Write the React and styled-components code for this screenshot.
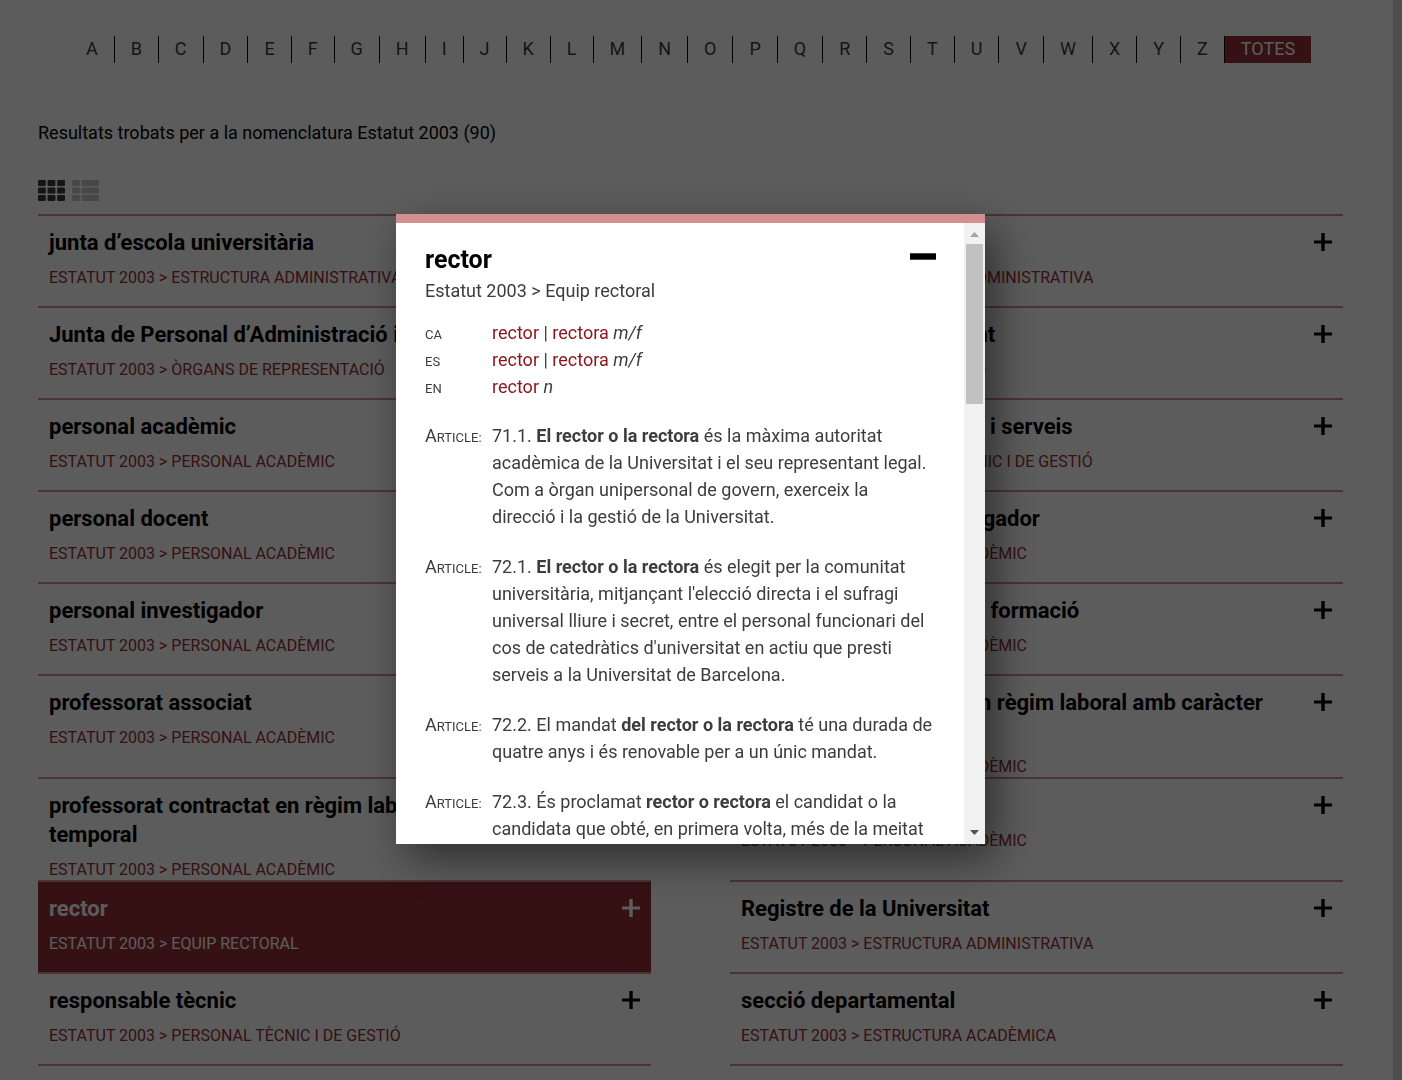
import React from "react";
import styled, { createGlobalStyle } from "styled-components";

const letters = "ABCDEFGHIJKLMNOPQRSTUVWXYZ".split("");

const terms = [
  { title: "junta d’escola universitària", area: "Estructura administrativa" },
  { title: "junta electoral", area: "Estructura administrativa" },
  {
    title: "Junta de Personal d’Administració i Serveis",
    area: "Òrgans de representació",
  },
  { title: "Junta de Personal Docent", area: "Representació" },
  { title: "personal acadèmic", area: "Personal acadèmic" },
  {
    title: "personal d’administració i serveis",
    area: "Personal tècnic i de gestió",
  },
  { title: "personal docent", area: "Personal acadèmic" },
  { title: "personal docent i investigador", area: "Personal acadèmic" },
  { title: "personal investigador", area: "Personal acadèmic" },
  { title: "personal investigador en formació", area: "Personal acadèmic" },
  { title: "professorat associat", area: "Personal acadèmic" },
  {
    title: "professorat contractat en règim laboral amb caràcter permanent",
    area: "Personal acadèmic",
  },
  {
    title: "professorat contractat en règim laboral amb caràcter temporal",
    area: "Personal acadèmic",
  },
  { title: "professorat emèrit", area: "Personal acadèmic" },
  { title: "rector", area: "Equip rectoral", active: true },
  { title: "Registre de la Universitat", area: "Estructura administrativa" },
  { title: "responsable tècnic", area: "Personal tècnic i de gestió" },
  { title: "secció departamental", area: "Estructura acadèmica" },
];

const translations = [
  { lang: "ca", words: ["rector", "rectora"], kind: "m/f" },
  { lang: "es", words: ["rector", "rectora"], kind: "m/f" },
  { lang: "en", words: ["rector"], kind: "n" },
];

const articles = [
  {
    before: "71.1. ",
    term: "El rector o la rectora",
    after:
      " és la màxima autoritat acadèmica de la Universitat i el seu representant legal. Com a òrgan unipersonal de govern, exerceix la direcció i la gestió de la Universitat.",
  },
  {
    before: "72.1. ",
    term: "El rector o la rectora",
    after:
      " és elegit per la comunitat universitària, mitjançant l'elecció directa i el sufragi universal lliure i secret, entre el personal funcionari del cos de catedràtics d'universitat en actiu que presti serveis a la Universitat de Barcelona.",
  },
  {
    before: "72.2. El mandat ",
    term: "del rector o la rectora",
    after: " té una durada de quatre anys i és renovable per a un únic mandat.",
  },
  {
    before: "72.3. És proclamat ",
    term: "rector o rectora",
    after:
      " el candidat o la candidata que obté, en primera volta, més de la meitat",
  },
];

export default function App() {
  return (
    <>
      <GlobalStyle />
      <Page>
        <Alphabet>
          {letters.map((letter) => (
            <LetterLink key={letter} href={`#${letter}`}>
              {letter}
            </LetterLink>
          ))}
          <AllLink href="#totes">TOTES</AllLink>
        </Alphabet>
        <Results>Resultats trobats per a la nomenclatura Estatut 2003 (90)</Results>
        <ViewSwitch>
          <ViewButton aria-label="Quadrícula">
            <GridIcon />
          </ViewButton>
          <ViewButton aria-label="Llista" $off>
            <ListIcon />
          </ViewButton>
        </ViewSwitch>
        <Terms>
          {terms.map((term) => (
            <Term key={term.title} $active={term.active}>
              <TermText>
                <TermTitle>{term.title}</TermTitle>
                <TermArea>Estatut 2003 &gt; {term.area}</TermArea>
              </TermText>
              <IconButton aria-label={`Obre ${term.title}`}>
                <PlusIcon />
              </IconButton>
            </Term>
          ))}
        </Terms>
      </Page>
      <Overlay>
        <Modal role="dialog" aria-labelledby="dialog-title">
          <ModalBody>
            <ModalHeader>
              <ModalTitle id="dialog-title">rector</ModalTitle>
              <IconButton aria-label="Tanca">
                <MinusIcon />
              </IconButton>
            </ModalHeader>
            <ModalArea>Estatut 2003 &gt; Equip rectoral</ModalArea>
            <Definitions>
              {translations.map(({ lang, words, kind }) => (
                <Definition key={lang}>
                  <Label>{lang}</Label>
                  <Description>
                    {words.map((word, index) => (
                      <React.Fragment key={word}>
                        {index > 0 && " | "}
                        <Word>{word}</Word>
                      </React.Fragment>
                    ))}{" "}
                    <em>{kind}</em>
                  </Description>
                </Definition>
              ))}
            </Definitions>
            {articles.map((article) => (
              <Article key={article.before}>
                <ArticleLabel>Article:</ArticleLabel>
                <Description>
                  {article.before}
                  <strong>{article.term}</strong>
                  {article.after}
                </Description>
              </Article>
            ))}
          </ModalBody>
          <ScrollTrack aria-hidden="true">
            <ScrollArrow color="#a3a3a3">
              <path d="M0 5 4.500 0 9 5z" />
            </ScrollArrow>
            <ScrollThumb />
            <ScrollArrow color="#505050">
              <path d="M0 0 4.500 5 9 0z" />
            </ScrollArrow>
          </ScrollTrack>
        </Modal>
      </Overlay>
    </>
  );
}

function ScrollArrow({ color, children }) {
  return (
    <svg width="9" height="5" viewBox="0 0 9 5" fill={color}>
      {children}
    </svg>
  );
}

function GridIcon() {
  return (
    <svg width="27" height="21" viewBox="0 0 27 21" fill="currentColor">
      {[0, 7.500, 15].map((y) =>
        [0, 9.600, 19.200].map((x) => (
          <rect key={`${x}-${y}`} x={x} y={y} width="7.800" height="6" rx="1.200" />
        ))
      )}
    </svg>
  );
}

function ListIcon() {
  return (
    <svg width="27" height="21" viewBox="0 0 27 21" fill="currentColor">
      {[0, 7.500, 15].map((y) => (
        <React.Fragment key={y}>
          <rect x="0" y={y} width="7.800" height="6" rx="1.200" />
          <rect x="9.600" y={y} width="17.400" height="6" rx="1.200" />
        </React.Fragment>
      ))}
    </svg>
  );
}

function PlusIcon() {
  return (
    <svg width="18" height="18" viewBox="0 0 18 18" fill="currentColor">
      <path d="M7.300 0h3.400v7.500H18v3h-7.300V18H7.300v-7.500H0v-3h7.300z" />
    </svg>
  );
}

function MinusIcon() {
  return (
    <svg width="26" height="7" viewBox="0 0 26 7" fill="currentColor">
      <rect y="0.300" width="26" height="6.400" />
    </svg>
  );
}

const GlobalStyle = createGlobalStyle`
  * {
    box-sizing: border-box;
  }

  body {
    margin: 0;
    background: #d8d8d8;
    color: #3c3c3c;
    font-family: Roboto, sans-serif;
    font-size: 18px;
    line-height: 27px;
  }

  a {
    text-decoration: none;
  }
`;

const Page = styled.main`
  min-height: 100vh;
  margin-right: 8px;
  padding: 36px 50px 12px 38px;
  background: #fff;
  border-right: 1px solid #ccc;
`;

const Alphabet = styled.nav`
  display: flex;
  flex-wrap: wrap;
  justify-content: center;
  line-height: 25px;
`;

const LetterLink = styled.a`
  padding: 0 16px 2px;
  border-right: 1px solid #000;
  color: #3c3c3c;
`;

const AllLink = styled.a`
  padding: 0 16px 2px;
  background: #932f37;
  color: #fff;
`;

const Results = styled.p`
  margin: 56px 0 34px;
  color: #000;
`;

const ViewSwitch = styled.div`
  display: flex;
  gap: 7px;
  margin-bottom: 13px;
`;

const ViewButton = styled.button`
  display: flex;
  padding: 0;
  border: 0;
  background: none;
  color: ${(props) => (props.$off ? "#c4c4c4" : "#3c3c3c")};
  cursor: pointer;
`;

const Terms = styled.div`
  display: grid;
  grid-template-columns: 1fr 1fr;
  column-gap: 79px;
`;

const Term = styled.article`
  display: flex;
  justify-content: space-between;
  align-items: flex-start;
  min-height: 92px;
  padding: 12px 11px 0;
  border-top: 2px solid #d28f90;
  background: ${(props) => (props.$active ? "#932f37" : "transparent")};
  color: ${(props) => (props.$active ? "#fff" : "#932f37")};

  h2,
  button {
    color: ${(props) => (props.$active ? "#fff" : "#000")};
  }

  &:nth-last-child(-n + 2) {
    min-height: 94px;
    border-bottom: 2px solid #d28f90;
  }
`;

const TermText = styled.div`
  flex: 1;
  padding-right: 32px;
`;

const TermTitle = styled.h2`
  margin: 0 0 10px;
  font-size: 22px;
  font-weight: 700;
  line-height: 29px;
`;

const TermArea = styled.p`
  margin: 0;
  font-size: 16px;
  line-height: 21px;
  text-transform: uppercase;
`;

const IconButton = styled.button`
  display: flex;
  align-items: center;
  height: 27px;
  padding: 0;
  border: 0;
  background: none;
  color: #000;
  cursor: pointer;
`;

const Overlay = styled.div`
  position: fixed;
  inset: 0;
  display: flex;
  align-items: center;
  justify-content: center;
  padding: 0 21px 22px 0;
  background: rgba(0, 0, 0, 0.64);
`;

const Modal = styled.section`
  display: flex;
  width: 90%;
  max-width: 589px;
  height: calc(100vh - 450px);
  border-top: 9px solid #d28f90;
  background: #fff;
  box-shadow: 10px 15px 40px rgba(0, 0, 0, 0.5);
`;

const ModalBody = styled.div`
  flex: 1;
  padding: 20px 28px 0 29px;
  overflow-y: auto;
  scrollbar-width: none;
`;

const ModalHeader = styled.header`
  display: flex;
  justify-content: space-between;
`;

const ModalTitle = styled.h1`
  margin: 0;
  color: #000;
  font-size: 25px;
  font-weight: 700;
  line-height: 34px;
`;

const ModalArea = styled.p`
  margin: 0 0 15px;
`;

const Definitions = styled.div`
  margin-bottom: 22px;
`;

const Definition = styled.div`
  display: grid;
  grid-template-columns: 67px 1fr;
  align-items: baseline;
`;

const Article = styled(Definition)`
  margin-bottom: 23px;
`;

const Label = styled.span`
  font-size: 13px;
  line-height: 22px;
  text-transform: uppercase;
`;

const ArticleLabel = styled(Label)`
  &::first-letter {
    font-size: 18px;
  }
`;

const Description = styled.div``;

const Word = styled.span`
  color: #8a151b;
`;

const ScrollTrack = styled.div`
  display: flex;
  flex-direction: column;
  align-items: center;
  width: 21px;
  padding: 9px 2px;
  background: #f1f1f1;

  svg:last-child {
    margin-top: auto;
  }
`;

const ScrollThumb = styled.div`
  width: 17px;
  height: 160px;
  margin-top: 7px;
  background: #c1c1c1;
`;
